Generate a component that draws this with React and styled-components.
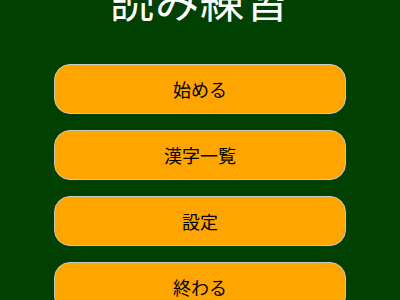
import React from 'react'
import styled, {createGlobalStyle} from 'styled-components'

const GlobalStyle = createGlobalStyle`
    html, body {
        margin: 0;
        padding: 0;
        background: #004000;
    }
    body {
        font-family: "Noto Sans CJK JP", "Noto Sans", sans-serif;
    }
`

const Page = styled.div`
    width: 400px;
    height: 300px;
    overflow: hidden;
    background: #004000;
    display: flex;
    flex-direction: column;
    align-items: center;
`
const Title = styled.h1`
    margin: -23px 0 0;
    color: #fff;
    font-size: 44px;
    line-height: 44px;
    font-weight: 400;
    letter-spacing: 1px;
`
const Menu = styled.nav`
    display: flex;
    flex-direction: column;
    gap: 16px;
    margin-top: 43px;
`
const MenuButton = styled.button`
    width: 292px;
    height: 50px;
    background: #ffa500;
    border: 1px solid #c8c8c8;
    border-radius: 16px;
    color: #000;
    font-family: "Noto Sans CJK JP", sans-serif;
    font-size: 18px;
    cursor: pointer;
`

const items = ['始める', '漢字一覧', '設定', '終わる']

const App = () => {
    return (
        <Page>
            <GlobalStyle/>
            <Title>読み練習</Title>
            <Menu>
                {items.map(item => <MenuButton key={item}>{item}</MenuButton>)}
            </Menu>
        </Page>
    )
}

export default App
